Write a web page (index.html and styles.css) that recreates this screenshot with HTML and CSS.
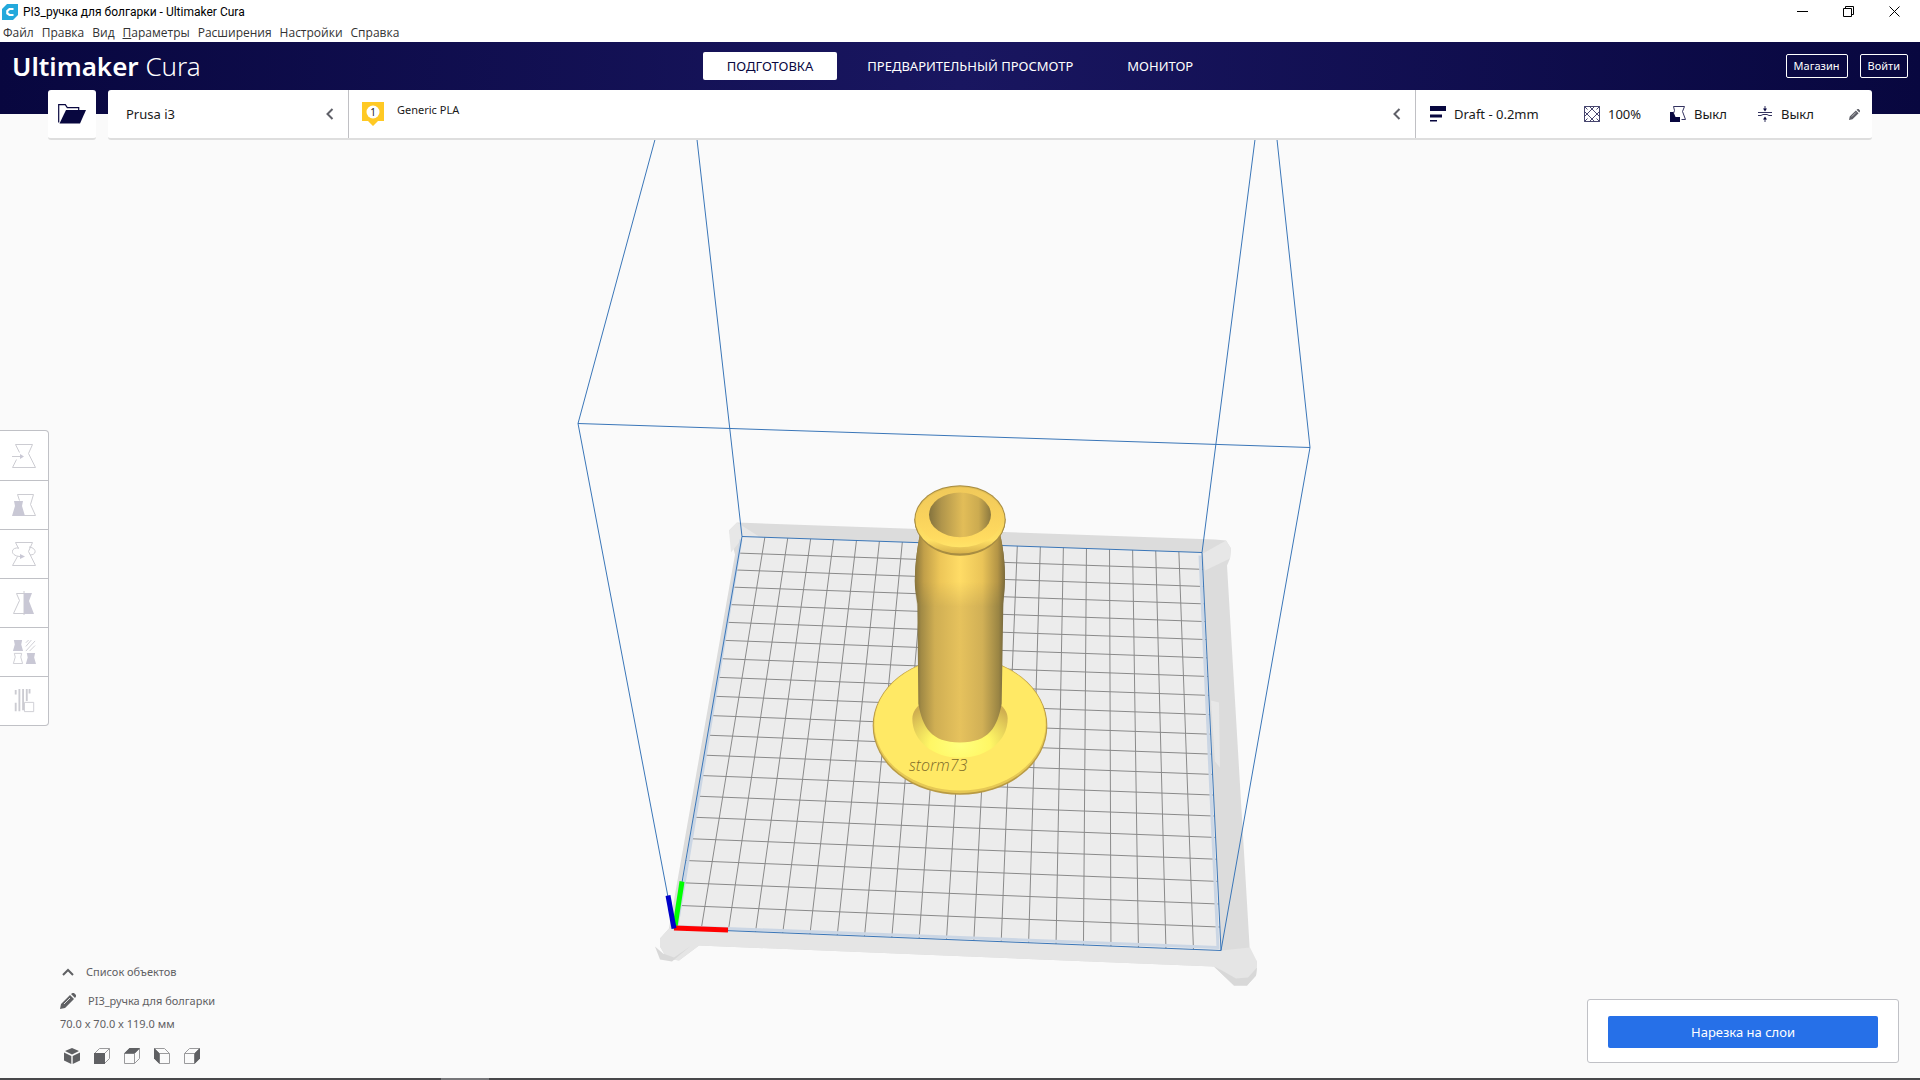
FILE: index.html
```html
<!DOCTYPE html>
<html lang="ru">
<head>
<meta charset="utf-8">
<title>PI3_ручка для болгарки - Ultimaker Cura</title>
<link rel="stylesheet" href="styles.css">
</head>
<body>
<div class="titlebar">
  <svg class="app-icon" viewBox="0 0 16 16"><path fill="#23a9dc" d="M5 0h11v11l-5 5H0V5z"/><path d="M11.500 5H7.500L5.300 7v2.500L7.500 11h4" fill="none" stroke="#fff" stroke-width="2.200"/></svg>
  <span class="window-title">PI3_ручка для болгарки - Ultimaker Cura</span>
  <div class="window-controls">
    <button aria-label="Свернуть"><svg viewBox="0 0 11 11"><path d="M0 5.500h11"/></svg></button>
    <button aria-label="Восстановить"><svg viewBox="0 0 11 11"><path d="M.5 2.500h8v8h-8zM2.500 2.500v-2h8v8h-2"/></svg></button>
    <button aria-label="Закрыть"><svg viewBox="0 0 11 11"><path d="M.5.5l10 10M10.500.5l-10 10"/></svg></button>
  </div>
</div>
<nav class="menubar">
  <a href="#">Файл</a><a href="#">Правка</a><a href="#">Вид</a><a href="#"><u>П</u>араметры</a><a href="#">Расширения</a><a href="#">Настройки</a><a href="#">Справка</a>
</nav>
<div class="top">
  <header class="header">
    <div class="brand"><b>Ultimaker</b> <span>Cura</span></div>
    <div class="tabs">
      <button class="tab active">ПОДГОТОВКА</button>
      <button class="tab">ПРЕДВАРИТЕЛЬНЫЙ ПРОСМОТР</button>
      <button class="tab">МОНИТОР</button>
    </div>
    <div class="account">
      <button class="outline">Магазин</button>
      <button class="outline">Войти</button>
    </div>
  </header>
  <div class="toolbar">
    <button class="open" aria-label="Открыть файл"><svg viewBox="0 0 28 20"><path d="M.7 18.500V.7h6.600l2 3h11.400v3" fill="none" stroke="#08073f" stroke-width="1.200"/><path d="M8 6h20l-6 13.500H1.500z" fill="#08073f"/></svg></button>
    <div class="config">
      <button class="printer"><span>Prusa i3</span><svg class="chevron" viewBox="0 0 8 12"><path d="M6.500 1L1.500 6l5 5"/></svg></button>
      <button class="material">
        <svg class="extruder" viewBox="0 0 24 24"><path d="M1 0h22v19h-6l-5 5-5-5H1z" fill="#ffc924"/><circle cx="12" cy="10" r="6.500" fill="#fff"/><text x="12" y="14" text-anchor="middle">1</text></svg>
        <span class="material-name">Generic PLA</span>
        <svg class="chevron" viewBox="0 0 8 12"><path d="M6.500 1L1.500 6l5 5"/></svg>
      </button>
      <button class="settings">
        <span class="setting profile"><svg viewBox="0 0 16 16"><path fill="#08073f" d="M0 0h16v5H0zM0 8.500h12v3H0zM0 14h7v1.500H0z"/></svg>Draft - 0.2mm</span>
        <span class="setting infill"><svg viewBox="0 0 16 16"><path fill="none" stroke="#33325f" stroke-width=".9" d="M.5.500h15v15H.5zM5.500.500l10 10M.5 5.500l10 10M10.500.500l-10 10M15.500 5.500l-10 10M.5.500l3 3M15.500.500l-3 3M.5 15.500l3-3M15.500 15.500l-3-3"/></svg>100%</span>
        <span class="setting support"><svg viewBox="0 0 16 16"><path fill="#08073f" d="M0 6h3.500l2 5H10v5H0z"/><path fill="none" stroke="#33325f" d="M3.500.500h11l-2 5 3 8h-4M3.500.500l1 4-1 3"/></svg>Выкл</span>
        <span class="setting adhesion"><svg viewBox="0 0 16 16"><path fill="none" stroke="#33325f" d="M1 6.500h14M1 9.500h3l2-1h4l2 1h3M8 0v4M8 12v4"/><path fill="#08073f" d="M6 2.500h4L8 5.500zM6 13.500h4L8 10.500z"/></svg>Выкл</span>
        <svg class="pencil" viewBox="0 0 16 16"><path fill="#5f6068" d="M0 16l1-5L10 2l4 4-9 9zM11 1l1.500-1H14l2 2v1.500L15 5z"/><path stroke="#fff" stroke-width=".8" d="M4 11l6-6"/></svg>
      </button>
    </div>
  </div>
</div>
<main class="stage">
  <svg class="scene" viewBox="0 139 1920 939" preserveAspectRatio="xMidYMid slice" role="img" aria-label="Модель на печатном столе">
    <defs>
      <linearGradient id="tube"><stop offset="0" stop-color="#75683d"/><stop offset=".07" stop-color="#a18a45"/><stop offset=".22" stop-color="#cfae53"/><stop offset=".5" stop-color="#e6c25d"/><stop offset=".75" stop-color="#d1b056"/><stop offset=".93" stop-color="#9a8544"/><stop offset="1" stop-color="#6d613b"/></linearGradient>
      <linearGradient id="neck"><stop offset="0" stop-color="#8a763c"/><stop offset=".1" stop-color="#c19f49"/><stop offset=".28" stop-color="#edc658"/><stop offset=".5" stop-color="#ffdc66"/><stop offset=".75" stop-color="#eac458"/><stop offset=".92" stop-color="#b39446"/><stop offset="1" stop-color="#7c6b3b"/></linearGradient>
      <linearGradient id="fade" x2="0" y2="1"><stop offset="0" stop-color="#fff"/><stop offset=".65" stop-color="#fff"/><stop offset="1" stop-color="#000"/></linearGradient>
      <mask id="neckfade" maskUnits="userSpaceOnUse" x="150" y="180" width="300" height="240"><rect x="150" y="190" width="300" height="220" fill="url(#fade)"/></mask>
      <linearGradient id="hole"><stop offset="0" stop-color="#84733e"/><stop offset=".2" stop-color="#b0954b"/><stop offset=".55" stop-color="#e2bd58"/><stop offset=".8" stop-color="#ccab50"/><stop offset="1" stop-color="#8b783f"/></linearGradient>
      <linearGradient id="rim" x2="0" y2="1"><stop offset="0" stop-color="#dcb952"/><stop offset=".3" stop-color="#f3cb58"/><stop offset=".8" stop-color="#ffe064"/><stop offset="1" stop-color="#d8b24c"/></linearGradient>
      <linearGradient id="lip" x2="0" y2="1"><stop offset="0" stop-color="#f0c95a"/><stop offset=".5" stop-color="#f9d25c"/><stop offset=".85" stop-color="#ffdb60"/><stop offset="1" stop-color="#ffe468"/></linearGradient>
      <radialGradient id="cone" cx=".5" cy=".8" r=".7"><stop offset="0" stop-color="#ffff7e"/><stop offset=".45" stop-color="#fff765"/><stop offset="1" stop-color="#cfae50"/></radialGradient>
    </defs>
    <path fill="#dcdcdc" d="M729 530l8-8 478 17 11 1 5 8-1 10-3 7 23 388 7 8-1 14-9 10h-13l-20-19-515-21-20 15-12-2-7-12v-8l9-10 66-374z"/>
    <path fill="#e5e5e5" d="M674 928l547 22 29-3 7 14-1 14-9 10h-13l-20-19-515-21-20 15-12-2-7-12v-8l9-10z"/>
    <path fill="#d8d8d8" d="M655 946l8 7 11 4 16-11 10-2-10 2-18 15-12-2zM1222 970l14 8 12-1 9-10-1 8-9 10h-13l-20-19z"/>
    <path fill="#e7e7e7" d="M729 530l8-8 22 14-16 1-12 15zM1203 553l23-13 5 8-1 10-25 12zM1211 700l8 2 1 65-5-6z"/>
    <path class="bed" d="M742 536L1202 552 1221 950 674 928z"/>
    <g id="grid" class="grid"></g>
    <path fill="none" stroke="#cbd6e4" stroke-width="3" d="M741 539L677 926 1218 947 1200 555"/>
    <path class="volume" d="M742 536L1202 552 1221 950 674 928zM578 423L1310 447 1221 950M578 423L674 928M578 423L655 139M1310 447L1277 139M742 536L697 139M1202 552L1255 139"/>
    <g fill="none" stroke-width="5"><path stroke="#0f0" d="M675 926L682 881"/><path stroke="#f00" d="M674 927.500L728 929.500"/><path stroke="#0000c8" d="M674 928L668 895"/></g>
    <g transform="translate(860 470) scale(.33333)">
      <ellipse cx="300" cy="766" rx="262" ry="207" fill="#b89a44"/>
      <ellipse cx="300" cy="764" rx="259" ry="204" fill="#e6c855"/>
      <ellipse cx="300" cy="761" rx="257" ry="199" fill="#ffe965"/>
      <path fill="url(#cone)" d="M157 745c0-40 50-75 143-75s143 35 143 75c0 65-60 117-143 117s-143-52-143-117z"/>
      <path fill="url(#tube)" d="M180 190H420C432 240 437 300 434 350L430 400 425 700C412 770 388 816 300 816S188 770 175 700L172 400 165 350C163 300 170 240 180 190z"/>
      <path fill="url(#neck)" mask="url(#neckfade)" d="M180 190H420C432 240 437 300 434 350L430 410H170L165 350C163 300 170 240 180 190z"/>
      <path fill="#a88d42" d="M163 145h274c0 60-60 111-137 111s-137-51-137-111z"/>
      <ellipse cx="300" cy="148" rx="137" ry="104" fill="#a88d42"/>
      <ellipse cx="300" cy="148" rx="134" ry="101" fill="url(#rim)"/>
      <ellipse cx="300" cy="140" rx="126" ry="90" fill="url(#lip)"/>
      <ellipse cx="300" cy="133" rx="93" ry="67" fill="url(#hole)"/>
    </g>
    <text class="engraving" x="909" y="770">storm73</text>
  </svg>
  <div class="tools">
    <button aria-label="Перемещение"><svg viewBox="0 0 24 24"><path d="M3.500.500h17l-4 9 7 14H.5l4-8M3.500.500l4 8M0 12.500h10"/><path class="solid" d="M8 10l4 2.500L8 15z"/></svg></button>
    <button aria-label="Масштаб"><svg viewBox="0 0 24 24"><path d="M12 22.500h11.500l-5-11 3-10H5.500l2 6"/><path class="solid" d="M2 8h9l-1 5 3 10H0l3-10z"/></svg></button>
    <button aria-label="Вращение"><svg viewBox="0 0 24 24"><path d="M3.500.500h17l-4 9 7 14H.5l5-9M3.500.500l3 6M7 6C-2 5-2 14 8 14.500M17 5c8 1 8 8 1 8"/><path class="solid" d="M8 12l5 2.500L8 17z"/></svg></button>
    <button aria-label="Отражение"><svg viewBox="0 0 24 24"><path d="M12 0v24M12 2.500H4.500l3 7-6 13H12"/><path class="solid" d="M12 2h8l-3 8 5 13H12z"/></svg></button>
    <button aria-label="Настройки модели"><svg viewBox="0 0 24 26"><path class="solid" d="M1 0h9L9 5l2 7H0l2-7zM15 14h9l-1 5 2 7H14l2-7z"/><path d="M1.500 14.500h8l-1 4 2 7H.5l2-7zM14 12L24 1M14 7l6-7M18 12l6-6M14 3l3-3"/></svg></button>
    <button aria-label="Блокировка поддержки"><svg viewBox="0 0 24 26"><path stroke-width="2" d="M3 1v5M3 15v9M7 0v24M11 0v23M15 0v13M18 0v5"/><path d="M12.500 14.500h10v10h-10z"/></svg></button>
  </div>
  <section class="objects">
    <button class="line list"><svg viewBox="0 0 12 8"><path fill="none" stroke="#5f6063" stroke-width="2" d="M1 7l5-5 5 5"/></svg>Список объектов</button>
    <button class="line name"><svg viewBox="0 0 16 16"><path fill="#5f6063" d="M0 16l1-5L10 2l4 4-9 9zM11 1l1.500-1H14l2 2v1.500L15 5z"/><path stroke="#fff" stroke-width=".8" d="M4 11l6-6"/></svg>PI3_ручка для болгарки</button>
    <p class="size">70.0 x 70.0 x 119.0 мм</p>
    <div class="views">
      <button aria-label="Трёхмерный вид"><svg viewBox="0 0 16 16"><path class="face" d="M8 0l7 3-7 3.500L1 3zM0 4.500L7.300 8v8L0 12.500zM16 4.500L8.700 8v8l7.300-3.500z"/></svg></button>
      <button aria-label="Вид спереди"><svg viewBox="0 0 16 16"><path d="M.5 5.500l5-5h10v10l-5 5H.5zM.5 5.500h10v10M10.500 5.500l5-5"/><path class="face" d="M0 5h11v11H0z"/></svg></button>
      <button aria-label="Вид сверху"><svg viewBox="0 0 16 16"><path d="M.5 5.500l5-5h10v10l-5 5H.5zM.5 5.500h10v10M10.500 5.500l5-5"/><path class="face" d="M0 5.500L5.500 0H16l-5.500 5.500z"/></svg></button>
      <button aria-label="Вид слева"><svg viewBox="0 0 16 16"><path d="M15.500 5.500l-5-5H.5v10l5 5h10zM15.500 5.500h-10v10M5.500 5.500l-5-5"/><path class="face" d="M0 0l5.500 5.500V16L0 10.500z"/></svg></button>
      <button aria-label="Вид справа"><svg viewBox="0 0 16 16"><path d="M.5 5.500l5-5h10v10l-5 5H.5zM.5 5.500h10v10M10.500 5.500l5-5"/><path class="face" d="M16 0l-5.500 5.500V16l5.500-5.500z"/></svg></button>
    </div>
  </section>
  <div class="action"><button class="slice">Нарезка на слои</button></div>
</main>
<footer class="taskbar"><span></span></footer>
<script src="grid.js"></script>
</body>
</html>
```
FILE: styles.css
```css
* { box-sizing: border-box; }
body {
  margin: 0;
  min-height: 100vh;
  display: flex;
  flex-direction: column;
  background: #fafafa;
  color: #191919;
  font: 13px/18px "Noto Sans", "Open Sans", sans-serif;
}
button {
  margin: 0;
  padding: 0;
  border: 0;
  background: none;
  color: inherit;
  font: inherit;
  cursor: pointer;
}
svg { display: block; flex: none; }

.titlebar {
  display: flex;
  align-items: center;
  height: 23px;
  padding: 0 2px;
  gap: 5px;
  background: #fff;
  color: #000;
  font: 12px/16px Roboto, "Noto Sans", sans-serif;
}
.app-icon { width: 16px; height: 16px; }
.window-controls { display: flex; margin-left: auto; }
.window-controls button { width: 46px; height: 20px; padding: 0 17px; }
.window-controls svg { width: 11px; height: 11px; fill: none; stroke: #000; }

.menubar {
  display: flex;
  gap: 8px;
  height: 19px;
  padding: 0 3px;
  background: #fff;
  font: 12px/19px "Open Sans", "Noto Sans", sans-serif;
}
.menubar a { color: #333; text-decoration: none; }

.top { background: linear-gradient(90deg, #08073f, #191660 50%, #08073f) top / 100% 72px no-repeat; }
.header {
  display: grid;
  grid-template-columns: 1fr auto 1fr;
  align-items: center;
  height: 48px;
  padding: 0 12px;
  color: #fff;
}
.brand { font-size: 26px; line-height: 36px; font-weight: 300; }
.brand b { font-weight: 600; }
.tabs { display: flex; gap: 6px; }
.tab { height: 28px; padding: 0 24px; border-radius: 2px; }
.tab.active { background: #fff; color: #08073f; }
.account { display: flex; justify-content: flex-end; gap: 12px; }
.outline { height: 24px; padding: 0 7px; border: 1px solid #fff; border-radius: 2px; font-size: 11px; }

.toolbar { display: flex; gap: 12px; padding: 0 48px; position: relative; z-index: 1; }
.open, .config { height: 50px; background: #fff; border-radius: 3px; border-bottom: 2px solid #dedede; }
.open { display: grid; place-items: center; width: 48px; }
.open svg { width: 28px; height: 20px; }
.config { flex: 1; display: grid; grid-template-columns: 240px 1fr 457px; }
.printer, .material, .settings { display: flex; align-items: center; text-align: left; }
.printer { justify-content: space-between; padding: 0 14px 0 18px; }
.material, .settings { border-left: 1px solid #c0c0c4; padding: 0 14px 0 12px; }
.material { gap: 12px; }
.material-name { align-self: flex-start; padding-top: 11px; font-size: 11px; }
.material .chevron { margin-left: auto; }
.chevron { width: 8px; height: 12px; fill: none; stroke: #5f6068; stroke-width: 2; }
.extruder { width: 24px; height: 24px; }
.extruder text { font-size: 10px; fill: #222; }
.settings { display: grid; grid-template-columns: 154px 86px 87px 1fr auto; padding: 0 12px 0 14px; }
.setting { display: flex; align-items: center; gap: 8px; }
.setting svg { width: 16px; height: 16px; }
.pencil { width: 11px; height: 11px; }

.stage {
  flex: 1;
  position: relative;
  display: grid;
  grid-template-columns: 1fr auto;
  grid-template-rows: 1fr;
}
.scene { position: absolute; inset: 0; width: 100%; height: 100%; }
.bed { fill: #ececec; }
.grid { stroke: #8a8a8a; stroke-width: 1; }
.volume { fill: none; stroke: #3a76b8; stroke-width: 1; }
.engraving { font: italic 300 16px "Open Sans", sans-serif; fill: #7d6a28; }

.tools {
  grid-row: 1;
  grid-column: 1;
  align-self: center;
  justify-self: start;
  position: relative;
  width: 49px;
  margin-bottom: 62px;
  background: #fff;
  border: 1px solid #c0c1c6;
  border-left: 0;
  border-radius: 0 4px 4px 0;
}
.tools button { display: grid; place-items: center; width: 100%; height: 49px; }
.tools button + button { border-top: 1px solid #c0c1c6; }
.tools svg { width: 24px; height: 24px; fill: none; stroke: #ccccd2; }
.tools .solid { fill: #c9c8d5; stroke: none; }

.objects {
  grid-row: 1;
  grid-column: 1;
  position: relative;
  align-self: end;
  justify-self: start;
  padding: 0 0 14px 60px;
  color: #5f6063;
  font-size: 11px;
}
.line { display: flex; align-items: center; height: 29px; }
.list { gap: 12px; padding-left: 2px; }
.list svg { width: 12px; height: 8px; }
.name { gap: 12px; }
.name svg { width: 16px; height: 16px; }
.size { margin: 0 0 15px; }
.views { display: flex; gap: 14px; padding-left: 4px; }
.views svg { width: 16px; height: 16px; fill: none; stroke: #9a9a9c; stroke-width: 1; }
.views .face { fill: #5f6063; stroke: none; }

.action {
  grid-row: 1;
  grid-column: 2;
  position: relative;
  align-self: end;
  width: 312px;
  margin: 0 21px 15px 0;
  padding: 16px 20px 14px;
  background: #fff;
  border: 1px solid #c0c1c6;
  border-radius: 3px;
}
.slice { display: block; width: 100%; height: 32px; border-radius: 2px; background: #2670e8; color: #fff; }

.taskbar { height: 2px; padding-left: 441px; background: #48484a; }
.taskbar span { display: block; width: 48px; height: 2px; background: #77777a; }
```
FILE: grid.js
```js
// Projects the 20 x 20 cell build plate onto its four on-screen corners.
const [a, b, c, d] = [[742, 536], [1202, 552], [1221, 950], [674, 928]];
const sx = a[0] - b[0] + c[0] - d[0];
const sy = a[1] - b[1] + c[1] - d[1];
const dx1 = b[0] - c[0], dx2 = d[0] - c[0];
const dy1 = b[1] - c[1], dy2 = d[1] - c[1];
const det = dx1 * dy2 - dx2 * dy1;
const g = (sx * dy2 - dx2 * sy) / det;
const h = (dx1 * sy - sx * dy1) / det;
const project = (u, v) => {
  const w = g * u + h * v + 1;
  const x = (b[0] - a[0] + g * b[0]) * u + (d[0] - a[0] + h * d[0]) * v + a[0];
  const y = (b[1] - a[1] + g * b[1]) * u + (d[1] - a[1] + h * d[1]) * v + a[1];
  return [x / w, y / w];
};
const grid = document.getElementById('grid');
const line = (p, q) => {
  const path = document.createElementNS('http://www.w3.org/2000/svg', 'path');
  path.setAttribute('d', `M${p}L${q}`);
  grid.append(path);
};
for (let i = 1; i < 20; i++) {
  const t = i / 20;
  line(project(t, 0), project(t, 1));
  line(project(0, t), project(1, t));
}
```
